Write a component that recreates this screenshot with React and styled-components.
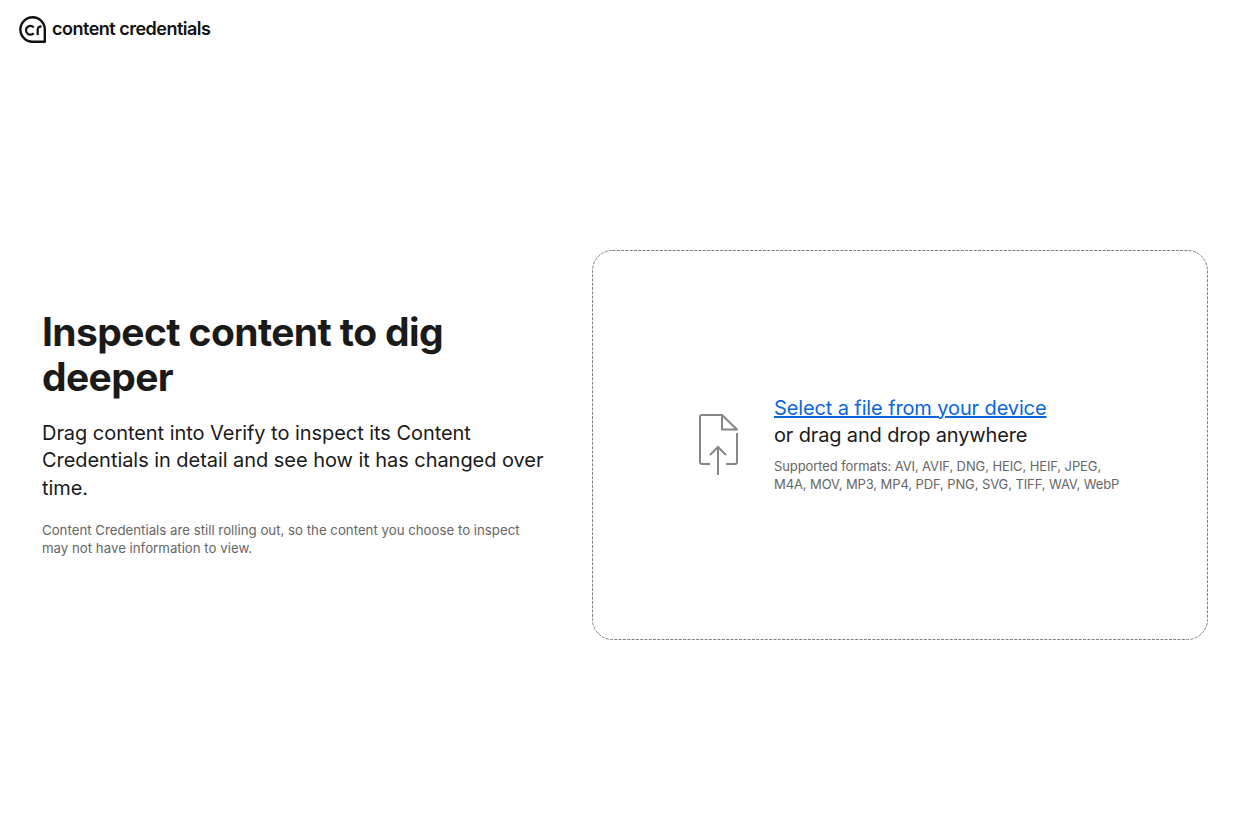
import React from "react";
import styled, { createGlobalStyle } from "styled-components";

const Global = createGlobalStyle`
  html, body { margin: 0; padding: 0; background: #fff; }
  body { font-family: Inter, "Liberation Sans", sans-serif; color: #1a1a1a; }
`;

const Header = styled.header`
  height: 68px;
  box-sizing: border-box;
  padding: 16px 19px 0;
  display: flex;
  align-items: flex-start;
  gap: 6px;
`;

const LogoText = styled.span`
  font-size: 18px;
  font-weight: 600;
  letter-spacing: -0.5px;
  line-height: 26px;
  color: #111;
`;

const Main = styled.main`
  height: 754px;
  box-sizing: border-box;
  padding: 0 43px 0 42px;
  display: grid;
  grid-template-columns: 505px 616px;
  column-gap: 45px;
  align-items: center;
`;

const Intro = styled.section`
  display: flex;
  flex-direction: column;
  padding-bottom: 24px;
`;

const Title = styled.h1`
  margin: 0 0 21px;
  font-size: 39px;
  line-height: 45px;
  font-weight: 700;
  letter-spacing: -0.6px;
  color: #1a1a1a;
`;

const Lead = styled.p`
  margin: 0 0 19px;
  font-size: 20px;
  line-height: 27.5px;
  font-weight: 400;
  letter-spacing: -0.05px;
  color: #1a1a1a;
`;

const Note = styled.p`
  margin: 0;
  font-size: 13.25px;
  line-height: 18px;
  color: #666;
`;

const DropZone = styled.section`
  position: relative;
  height: 390px;
  box-sizing: border-box;
  border-radius: 20px;
  padding-left: 25px;
  display: flex;
  align-items: center;
  justify-content: center;
  gap: 36px;
`;

const DashOutline = styled.svg`
  position: absolute;
  inset: 0;
  width: 100%;
  height: 100%;
  pointer-events: none;
`;

const Details = styled.div`
  display: flex;
  flex-direction: column;
  width: 352px;
  padding-bottom: 3px;
`;

const SelectLink = styled.a`
  font-size: 20px;
  line-height: 27px;
  color: #0a66dc;
  text-decoration: underline;
  letter-spacing: -0.12px;
  cursor: pointer;
`;

const DropText = styled.div`
  font-size: 20px;
  line-height: 27px;
  color: #1a1a1a;
  letter-spacing: -0.15px;
`;

const Formats = styled.p`
  margin: 8px 0 0;
  font-size: 13px;
  line-height: 18px;
  letter-spacing: -0.1px;
  color: #666;
`;

const Logo = () => (
  <svg width="27" height="27" viewBox="0 0 27 27" fill="none" aria-hidden="true">
    <path d="M25.8 25.7H13.5A12.2 12.2 0 1 1 25.8 13.5Z" stroke="#111" strokeWidth="2.4" strokeLinejoin="round" />
    <path d="M14.7 11.4a4.4 4.4 0 1 0 0 5.8" stroke="#111" strokeWidth="2.2" />
    <path d="M18.7 19v-5.2c0-2.2 1.2-3.4 3.9-3.4" stroke="#111" strokeWidth="2.2" />
  </svg>
);

const FileIcon = () => (
  <svg width="39" height="62" viewBox="0 0 39 62" fill="none" stroke="#868686" strokeWidth="2" aria-hidden="true">
    <path d="M23 1H3A2 2 0 0 0 1 3V48A2 2 0 0 0 3 50H11" />
    <path d="M23 1V15.5H38L23 1Z" strokeLinejoin="round" />
    <path d="M38 19V48A2 2 0 0 1 36 50H27" />
    <path d="M19 61V33M11 41L19 33L27 41" />
  </svg>
);

export default function App() {
  return (
    <>
      <Global />
      <Header>
        <Logo />
        <LogoText>content credentials</LogoText>
      </Header>
      <Main>
        <Intro>
          <Title>Inspect content to dig deeper</Title>
          <Lead>Drag content into Verify to inspect its Content Credentials in detail and see how it has changed over time.</Lead>
          <Note>Content Credentials are still rolling out, so the content you choose to inspect may not have information to view.</Note>
        </Intro>
        <DropZone>
          <DashOutline aria-hidden="true">
            <rect x="0.5" y="0.5" width="615" height="389" rx="20" fill="none" stroke="#808080" strokeDasharray="3 1.3" />
          </DashOutline>
          <FileIcon />
          <Details>
            <SelectLink>Select a file from your device</SelectLink>
            <DropText>or drag and drop anywhere</DropText>
            <Formats>Supported formats: AVI, AVIF, DNG, HEIC, HEIF, JPEG, M4A, MOV, MP3, MP4, PDF, PNG, SVG, TIFF, WAV, WebP</Formats>
          </Details>
        </DropZone>
      </Main>
    </>
  );
}
